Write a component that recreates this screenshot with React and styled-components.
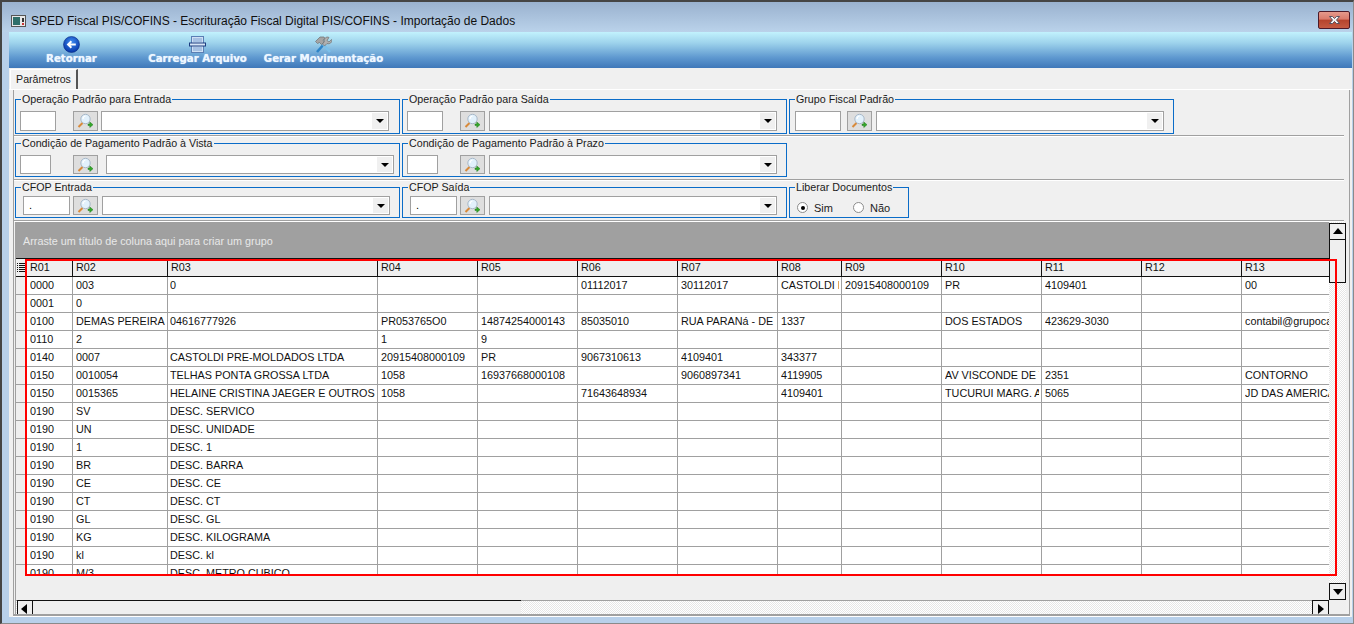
import React from 'react';
import styled, { createGlobalStyle } from 'styled-components';

const GlobalStyle = createGlobalStyle`
  html, body { margin: 0; padding: 0; width: 1354px; height: 624px; overflow: hidden; background: #b8d0ea; }
  * { box-sizing: border-box; }
  body { font-family: "Liberation Sans", Arial, sans-serif; font-size: 12px; color: #000; }
`;

// --- window chrome ---
const Window = styled.div`
  position: relative; width: 1354px; height: 624px; display: flex; flex-direction: column;
  border-top: 2px solid #454545; border-left: 2px solid #454545; border-right: 1px solid #8a8a8a;
  border-bottom: 1px solid #8a8a8a; background: #b8d0ea;
`;
const TitleBar = styled.div`
  height: 30px; flex: none; display: flex; align-items: center; padding: 8px 3px 0 9px;
  background: linear-gradient(#9ab2cf, #bad2ea);
`;
const TitleText = styled.span`
  flex: 1; margin-left: 5px; font-size: 12px; color: #101010; white-space: nowrap;
`;
const CloseButton = styled.div`
  width: 32px; height: 18px; margin-top: -3px; display: flex; align-items: center; justify-content: center;
  border: 1px solid #4d1a28; border-radius: 2px;
  background: linear-gradient(#e59a8c 0%, #d9796a 45%, #b5432c 50%, #c45a42 100%);
`;
const Inner = styled.div`
  margin: 0 1px 0 7px; flex: none; height: 585px; display: flex; flex-direction: column; background: #f0f0f0;
`;
const Toolbar = styled.div`
  height: 36px; flex: none; display: flex; align-items: flex-start;
  background: linear-gradient(#c2f2fd 0%, #9ed3ec 30%, #5d97cf 72%, #3f78b9 100%);
`;
const ToolItem = styled.div`
  width: ${p => p.$w}px; margin-left: ${p => p.$ml}px; display: flex; flex-direction: column; align-items: center;
  padding-top: 4px;
`;
const ToolLabel = styled.span`
  margin-top: -1px; font-family: "DejaVu Sans", sans-serif; font-weight: bold; font-size: 10.2px; line-height: 14px;
  color: #eef7ff; white-space: nowrap; text-shadow: 0 0 1px #dcecff;
`;
const TabStrip = styled.div`
  height: 22px; flex: none; padding: 1px 0 0 1px; display: flex; border-bottom: 1px solid #fff;
`;
const Tab = styled.div`
  width: 68px; height: 20px; display: flex; align-items: center; justify-content: center; font-size: 10.6px;
  color: #1a1a1a; background: #f2f2f2; border-top: 1px solid #fff; border-left: 1px solid #fff;
  border-right: 2px solid #555; padding-bottom: 1px;
`;
const Panel = styled.div`
  flex: 1; margin: 0 2px 0 4px; border-left: 1px solid #a0a0a0; border-right: 1px solid #a0a0a0;
  display: flex; flex-direction: column; min-height: 0;
`;

// --- parameter rows ---
const ParamRow = styled.div`
  height: ${p => p.$h}px; flex: none; padding: ${p => p.$top}px 0 0 1px; display: flex; gap: 2px; align-items: flex-start;
  border-bottom: 1px solid #a0a0a0; box-shadow: 0 1px 0 #fff; margin-right: 5px;
`;
const FieldBox = styled.fieldset`
  width: ${p => p.$w}px; flex: none; margin: 0; min-width: 0; border: 1px solid #0a6cc8;
  padding: ${p => p.$pt}px 0 2px 0;
`;
const FieldLegend = styled.legend`
  margin-left: 5px; padding: 0 1px; font-size: 10.7px; line-height: 14px; color: #1a1a1a; white-space: nowrap;
`;
const Controls = styled.div`
  display: flex; height: ${p => p.$h}px; margin-left: ${p => p.$pl}px;
`;
const CodeInput = styled.div`
  width: ${p => p.$w}px; flex: none; border: 1px solid #a0a0a0; background: #fff; font-size: 11px;
  line-height: 16px; padding-left: 5px;
`;
const LookupButton = styled.div`
  width: 25px; flex: none; margin-left: ${p => p.$ml}px; display: flex; align-items: center; justify-content: center;
  border: 1px solid #a0a0a0; background: #dedede;
`;
const Combo = styled.div`
  width: 288px; flex: none; margin-left: ${p => p.$ml}px; display: flex; justify-content: flex-end; padding: 1px;
  border: 1px solid #a0a0a0; background: #fff;
`;
const ComboArrow = styled.div`
  width: 15px; display: flex; align-items: center; justify-content: center; background: #f0f0f0;
`;
const TriangleDown = styled.div`
  width: 0; height: 0; border-left: 4px solid transparent; border-right: 4px solid transparent; border-top: 4px solid #000;
`;
const RadioOption = styled.div`
  width: ${p => p.$w}px; display: flex; align-items: center; gap: 6px; font-size: 11px; color: #222;
`;
const RadioMark = styled.div`
  width: 11px; height: 11px; border-radius: 50%; border: 1px solid #8c8c8c; background: #fff;
  display: flex; align-items: center; justify-content: center;
  &::after { content: ''; width: 4px; height: 4px; border-radius: 50%; background: ${p => (p.$on ? '#000' : 'transparent')}; }
`;

// --- data grid ---
const GridArea = styled.div`
  margin: 1px 3px 0 1px; flex: 1; display: flex; flex-direction: column; min-height: 0;
`;
const GridTop = styled.div`
  height: 378px; flex: none; display: flex;
`;
const GridMain = styled.div`
  width: 1314px; flex: none; display: flex; flex-direction: column; background: #efefef;
  border-left: 1px solid #a0a0a0;
`;
const GroupBand = styled.div`
  height: 36px; flex: none; background: #a0a0a0; color: #e8e8e8; font-size: 10.8px; padding: 13px 0 0 7px; line-height: 13px;
`;
const HeadRow = styled.div`
  height: 19px; flex: none; display: grid; grid-template-columns: ${p => p.$cols}; background: #efefef;
  border-top: 1px solid #111; border-bottom: 1px solid #111;
`;
const HeadCell = styled.div`
  font-size: 10.8px; line-height: 17px; padding-left: 3px; border-right: 1px solid #111; color: #111; overflow: hidden;
  &:last-child { border-right: 0; }
`;
const IndicatorHead = styled.div`
  display: flex; align-items: center; justify-content: center; border-right: 1px solid #111;
`;
const RowsClip = styled.div`
  height: 297px; flex: none; overflow: hidden; background: #fff;
`;
const DataRow = styled.div`
  height: 18px; display: grid; grid-template-columns: ${p => p.$cols}; border-bottom: 1px solid #a0a0a0;
`;
const Indicator = styled.div`
  background: #efefef; border-right: 1px solid #777;
`;
const DataCell = styled.div`
  padding: 0 2px 0 3px; border-right: 1px solid #a0a0a0; min-width: 0;
  &:nth-child(4) { padding-left: 2px; }
  &:last-child { border-right: 0; padding-right: 0; }
`;
const CellText = styled.span`
  display: block; overflow: hidden; white-space: nowrap; font-size: 10.8px; line-height: 17px; color: #111;
`;

// --- scrollbars ---
const dither = `repeating-conic-gradient(#fff 0 25%, #e6e6e6 0 50%) 0 0 / 2px 2px`;
const VScroll = styled.div`
  width: 17px; flex: none; display: flex; flex-direction: column; padding-top: 1px; background: ${dither};
`;
const ScrollButton = styled.div`
  width: ${p => p.$w || 17}px; height: 17px; flex: none; display: flex; align-items: center; justify-content: center;
  background: #efefef; border: 1px solid #111;
`;
const VThumb = styled.div`
  height: 43px; flex: none; background: #efefef; border: 1px solid #111; border-top: 0;
`;
const Spacer = styled.div`
  flex: 1;
`;
const HScroll = styled.div`
  height: 17px; flex: none; display: flex; padding-left: 1px; border-left: 1px solid #a0a0a0; background: ${dither};
  box-shadow: inset 0 1px 0 #a0a0a0;
`;
const HThumb = styled.div`
  width: 488px; flex: none; background: #efefef; border-top: 1px solid #111; border-bottom: 1px solid #111;
`;
const Corner = styled.div`
  width: 17px; flex: none; background: #efefef;
`;
const BottomEdge = styled.div`
  height: 3px; flex: none; background: #a0a0a0; margin: 0 -1px; border-bottom: 1px solid #fff;
`;
const Annotation = styled.div`
  position: absolute; left: 23px; top: 257px; width: 1312px; height: 317px; border: 2px solid #f00; pointer-events: none;
`;

// --- drawings ---
const AppIcon = () => (
  <svg width="15" height="12" viewBox="0 0 15 12">
    <rect x="0.5" y="0.5" width="14" height="11" fill="#e8e8e8" stroke="#555" />
    <rect x="2" y="2" width="7" height="8" fill="#2f6f6a" />
    <rect x="11" y="3" width="2" height="4" fill="#333" />
    <rect x="11" y="8" width="2" height="2" fill="#c33" />
  </svg>
);
const CloseGlyph = () => (
  <svg width="15" height="10" viewBox="0 0 15 10">
    <path d="M2.5 1.5h3L7.5 3.5 9.5 1.5h3L9.5 5l3 3.5h-3L7.5 6.5 5.5 8.5h-3L5.5 5z" fill="#f4f4f4" stroke="#4a4a5a" strokeWidth="0.9" />
  </svg>
);
const BackIcon = () => (
  <svg width="17" height="17" viewBox="0 0 17 17">
    <defs>
      <radialGradient id="backFill" cx="50%" cy="35%" r="65%">
        <stop offset="0%" stopColor="#3f8cf0" />
        <stop offset="100%" stopColor="#0434a8" />
      </radialGradient>
    </defs>
    <circle cx="8.5" cy="8.5" r="8" fill="url(#backFill)" stroke="#0a2a80" strokeWidth="0.6" />
    <path d="M12.8 8.5H5.6M8.4 5.2 5 8.5l3.4 3.3" fill="none" stroke="#fff" strokeWidth="1.9" />
  </svg>
);
const LoadIcon = () => (
  <svg width="17" height="17" viewBox="0 0 17 17">
    <rect x="2.5" y="0.5" width="12" height="16" fill="#cfe0f4" stroke="#5b7fb5" />
    <path d="M4 3h9M4 5h9M4 12h9M4 14h9" stroke="#7fa2d2" />
    <rect x="0.5" y="7" width="16" height="3" fill="#d8e6f6" stroke="#1c3c80" />
  </svg>
);
const ToolsIcon = () => (
  <svg width="17" height="17" viewBox="0 0 17 17">
    <path d="M2 16 10 7" stroke="#2e84c8" strokeWidth="2.6" />
    <path d="M15 16 7 7" stroke="#7cc0ea" strokeWidth="2.6" />
    <path d="M0.5 5.5 5 1h4l1 1.5L8 4l1 2-2.5 2.5L4.5 6.5l-2 1z" fill="#a4a4a4" stroke="#707070" strokeWidth="0.7" />
    <path d="M16.5 3.5 14 6l-2-1.5L14 1.5C11.500 0 8.500 2.500 9.500 5.500L7.500 8l2 2 2.500-2.500c2.500 1 5.500-1 4.500-4z" fill="#b0b0b0" stroke="#707070" strokeWidth="0.7" />
  </svg>
);
const LookupIcon = () => (
  <svg width="17" height="16" viewBox="0 0 17 16">
    <path d="M1.500 14 5.500 10" stroke="#d88a3a" strokeWidth="2" />
    <circle cx="8.500" cy="6" r="4.700" fill="#e2f1fc" stroke="#a8b8c8" strokeWidth="1" />
    <path d="M6 6A3 3 0 0 1 8.500 3" stroke="#fff" strokeWidth="1.200" fill="none" />
    <path d="M11 11h1.800V9l3.200 2.700-3.200 2.800v-2H11z" fill="#35a82a" stroke="#1f7a1c" strokeWidth="0.500" />
  </svg>
);
const ListGlyph = () => (
  <svg width="8" height="10" viewBox="0 0 8 10">
    <path d="M0 .5h1M0 2.500h1M0 4.500h1M0 6.500h1M0 8.500h1M2 .5h6M2 2.500h6M2 4.500h6M2 6.500h6M2 8.500h6" stroke="#111" strokeWidth="1" />
  </svg>
);
const TriangleGlyph = ({ dir }) => {
  const points = { up: '0,7 10,7 5,1', down: '0,2 10,2 5,8', left: '7,0 7,10 1,5', right: '2,0 2,10 8,5' };
  return (
    <svg width="10" height="10" viewBox="0 0 10 10">
      <polygon points={points[dir]} fill="#000" />
    </svg>
  );
};

// --- page data ---
const fieldRows = [
  { h: 46, top: 2, fields: [
    { title: 'Operação Padrão para Entrada', w: 385, pl: 4, pt: 5, h: 20, code: 36, a: 17, b: 3 },
    { title: 'Operação Padrão para Saída', w: 385, pl: 4, pt: 5, h: 20, code: 36, a: 17, b: 4 },
    { title: 'Grupo Fiscal Padrão', w: 385, pl: 5, pt: 5, h: 20, code: 46, a: 6, b: 4 },
  ] },
  { h: 44, top: 0, fields: [
    { title: 'Condição de Pagamento Padrão à Vista', w: 385, pl: 4, pt: 5, h: 19, code: 31, a: 22, b: 8 },
    { title: 'Condição de Pagamento Padrão à Prazo', w: 385, pl: 4, pt: 5, h: 19, code: 31, a: 22, b: 4 },
  ] },
  { h: 41, top: 0, fields: [
    { title: 'CFOP Entrada', w: 385, pl: 7, pt: 2, h: 19, code: 47, a: 3, b: 4, value: '.' },
    { title: 'CFOP Saída', w: 385, pl: 7, pt: 2, h: 19, code: 47, a: 3, b: 4, value: '.' },
  ] },
];

const columns = '11px 46px 95px 210px 100px 100px 100px 100px 64px 100px 100px 100px 100px 1fr';
const headers = ['R01', 'R02', 'R03', 'R04', 'R05', 'R06', 'R07', 'R08', 'R09', 'R10', 'R11', 'R12', 'R13'];
const rows = [
  ['0000', '003', '0', '', '', '01112017', '30112017', 'CASTOLDI P', '20915408000109', 'PR', '4109401', '', '00'],
  ['0001', '0'],
  ['0100', 'DEMAS PEREIRA', '04616777926', 'PR053765O0', '14874254000143', '85035010', 'RUA PARANá - DE', '1337', '', 'DOS ESTADOS', '423629-3030', '', 'contabil@grupoca'],
  ['0110', '2', '', '1', '9'],
  ['0140', '0007', 'CASTOLDI PRE-MOLDADOS LTDA', '20915408000109', 'PR', '9067310613', '4109401', '343377'],
  ['0150', '0010054', 'TELHAS PONTA GROSSA LTDA', '1058', '16937668000108', '', '9060897341', '4119905', '', 'AV VISCONDE DE T', '2351', '', 'CONTORNO'],
  ['0150', '0015365', 'HELAINE CRISTINA JAEGER E OUTROS', '1058', '', '71643648934', '', '4109401', '', 'TUCURUI MARG. A', '5065', '', 'JD DAS AMERICA'],
  ['0190', 'SV', 'DESC. SERVICO'],
  ['0190', 'UN', 'DESC. UNIDADE'],
  ['0190', '1', 'DESC. 1'],
  ['0190', 'BR', 'DESC. BARRA'],
  ['0190', 'CE', 'DESC. CE'],
  ['0190', 'CT', 'DESC. CT'],
  ['0190', 'GL', 'DESC. GL'],
  ['0190', 'KG', 'DESC. KILOGRAMA'],
  ['0190', 'kl', 'DESC. kl'],
  ['0190', 'M/3', 'DESC. METRO CUBICO'],
];

const Field = ({ f }) => (
  <FieldBox $w={f.w} $pt={f.pt}>
    <FieldLegend>{f.title}</FieldLegend>
    <Controls $h={f.h} $pl={f.pl}>
      <CodeInput $w={f.code}>{f.value}</CodeInput>
      <LookupButton $ml={f.a}><LookupIcon /></LookupButton>
      <Combo $ml={f.b}>
        <ComboArrow><TriangleDown /></ComboArrow>
      </Combo>
    </Controls>
  </FieldBox>
);

const App = () => (
  <>
    <GlobalStyle />
    <Window>
      <TitleBar>
        <AppIcon />
        <TitleText>SPED Fiscal PIS/COFINS - Escrituração Fiscal Digital PIS/COFINS - Importação de Dados</TitleText>
        <CloseButton><CloseGlyph /></CloseButton>
      </TitleBar>
      <Inner>
        <Toolbar>
          <ToolItem $w={51} $ml={37}><BackIcon /><ToolLabel>Retornar</ToolLabel></ToolItem>
          <ToolItem $w={97} $ml={52}><LoadIcon /><ToolLabel>Carregar Arquivo</ToolLabel></ToolItem>
          <ToolItem $w={119} $ml={18}><ToolsIcon /><ToolLabel>Gerar Movimentação</ToolLabel></ToolItem>
        </Toolbar>
        <TabStrip><Tab>Parâmetros</Tab></TabStrip>
        <Panel>
          {fieldRows.map((row, i) => (
            <ParamRow key={i} $h={row.h} $top={row.top}>
              {row.fields.map(f => <Field key={f.title} f={f} />)}
              {i === 2 && (
                <FieldBox $w={120} $pt={6}>
                  <FieldLegend>Liberar Documentos</FieldLegend>
                  <Controls $h={15} $pl={7}>
                    <RadioOption $w={56}><RadioMark $on />Sim</RadioOption>
                    <RadioOption $w={50}><RadioMark />Não</RadioOption>
                  </Controls>
                </FieldBox>
              )}
            </ParamRow>
          ))}
          <GridArea>
            <GridTop>
              <GridMain>
                <GroupBand>Arraste um título de coluna aqui para criar um grupo</GroupBand>
                <HeadRow $cols={columns}>
                  <IndicatorHead><ListGlyph /></IndicatorHead>
                  {headers.map(h => <HeadCell key={h}>{h}</HeadCell>)}
                </HeadRow>
                <RowsClip>
                  {rows.map((row, i) => (
                    <DataRow key={i} $cols={columns}>
                      <Indicator />
                      {headers.map((h, c) => (
                        <DataCell key={h}><CellText>{row[c] || ''}</CellText></DataCell>
                      ))}
                    </DataRow>
                  ))}
                </RowsClip>
              </GridMain>
              <VScroll>
                <ScrollButton><TriangleGlyph dir="up" /></ScrollButton>
                <VThumb />
                <Spacer />
                <ScrollButton><TriangleGlyph dir="down" /></ScrollButton>
              </VScroll>
            </GridTop>
            <HScroll>
              <ScrollButton $w={16}><TriangleGlyph dir="left" /></ScrollButton>
              <HThumb />
              <Spacer />
              <ScrollButton><TriangleGlyph dir="right" /></ScrollButton>
              <Corner />
            </HScroll>
          </GridArea>
          <BottomEdge />
        </Panel>
      </Inner>
      <Annotation />
    </Window>
  </>
);

export default App;
